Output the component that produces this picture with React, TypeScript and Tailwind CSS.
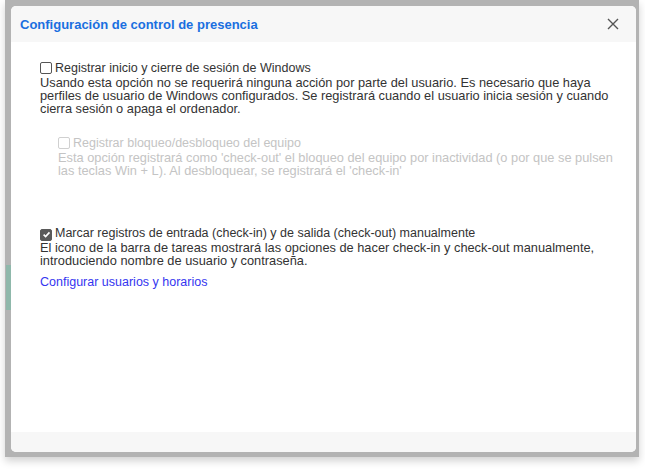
import React, { useState } from 'react';

function Box({ checked, disabled, onClick }: { checked: boolean; disabled?: boolean; onClick?: () => void }) {
  return (
    <span
      onClick={onClick}
      className={
        'inline-flex items-center justify-center w-[12px] h-[12px] rounded-[2px] border mr-[3px] align-[-2px] ' +
        (disabled
          ? 'border-[#d0d0d0] bg-white'
          : checked
          ? 'border-[#5a5a5a] bg-[#5a5a5a]'
          : 'border-[#555] bg-white')
      }
    >
      {checked && (
        <svg width="9" height="9" viewBox="0 0 10 10">
          <path d="M1.8 5.2 L4 7.4 L8.3 2.6" fill="none" stroke="white" strokeWidth="1.8" />
        </svg>
      )}
    </span>
  );
}

export default function App() {
  const [winLogin, setWinLogin] = useState(false);
  const [manual, setManual] = useState(true);

  return (
    <div className="w-[645px] h-[470px] bg-white overflow-hidden" style={{ fontFamily: '"Liberation Sans", Arial, sans-serif' }}>
      <div className="ml-[5px] w-[634px] h-[457px] bg-[#b3b3b3] shadow-[0_4px_8px_rgba(0,0,0,0.18)] pt-[6px] pl-[6px] pr-[3px] relative">
        <div className="absolute left-[1px] top-[265px] w-[5px] h-[45px] bg-[#8fb8ab]" />
        {/* Dialog */}
        <div className="w-[625px] h-[446px] bg-white rounded-[5px] flex flex-col overflow-hidden">
          <div className="h-[36px] bg-[#f7f7f7] flex items-center justify-between pl-[9px] pr-[17px]">
            <h2 className="text-[13px] font-bold text-[#1a6fe0] pt-[2px]">Configuración de control de presencia</h2>
            <button className="text-[#555]">
              <svg width="12" height="12" viewBox="0 0 12 12">
                <path d="M1 1 L11 11 M11 1 L1 11" stroke="#555" strokeWidth="1.4" />
              </svg>
            </button>
          </div>

          <div className="flex-1 pl-[29px] pr-[20px] pt-[18px] text-[12.8px] leading-[13px] text-[#333]">
            <div>
              <label className="block text-[12.5px] leading-[16px]">
                <Box checked={winLogin} onClick={() => setWinLogin(!winLogin)} />
                Registrar inicio y cierre de sesión de Windows
              </label>
              <p>
                Usando esta opción no se requerirá ninguna acción por parte del usuario. Es necesario que haya perfiles de
                usuario de Windows configurados. Se registrará cuando el usuario inicia sesión y cuando cierra sesión o apaga el
                ordenador.
              </p>
            </div>

            <div className="ml-[18px] mt-[20px] text-[#c4c4c4]">
              <label className="block text-[12.5px] leading-[16px]">
                <Box checked={false} disabled />
                Registrar bloqueo/desbloqueo del equipo
              </label>
              <p>
                Esta opción registrará como 'check-out' el bloqueo del equipo por inactividad (o por que se pulsen las teclas Win
                + L). Al desbloquear, se registrará el 'check-in'
              </p>
            </div>

            <div className="mt-[48px]">
              <label className="block text-[12.5px] leading-[16px]">
                <Box checked={manual} onClick={() => setManual(!manual)} />
                Marcar registros de entrada (check-in) y de salida (check-out) manualmente
              </label>
              <p>
                El icono de la barra de tareas mostrará las opciones de hacer check-in y check-out manualmente, introduciendo
                nombre de usuario y contraseña.
              </p>
              <a href="#" className="block mt-[9px] text-[12.5px] text-[#3535f0]">
                Configurar usuarios y horarios
              </a>
            </div>
          </div>

          <div className="h-[20px] bg-[#f7f7f7]" />
        </div>
      </div>
    </div>
  );
}
